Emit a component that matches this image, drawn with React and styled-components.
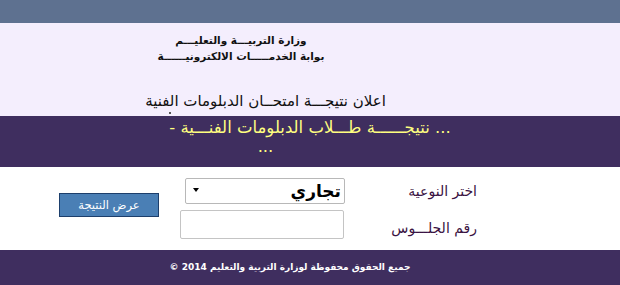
import React from "react";
import styled, { createGlobalStyle } from "styled-components";

const Global = createGlobalStyle`
  html, body { margin: 0; padding: 0; background: #ffffff; }
  body { font-family: "DejaVu Sans", "Noto Sans", sans-serif; }
  * { box-sizing: border-box; }
`;

const Page = styled.div`
  width: 620px;
  height: 285px;
  display: flex;
  flex-direction: column;
  overflow: hidden;
`;

const TopBar = styled.div`
  height: 23px;
  background: #5e7190;
  flex: none;
`;

const Header = styled.div`
  height: 93px;
  background: #f4eefd;
  flex: none;
  display: flex;
  flex-direction: column;
  position: relative;
`;

const Ministry = styled.div`
  width: 482px;
  padding-top: 9px;
  text-align: center;
  direction: rtl;
  font-weight: bold;
  font-size: 10.5px;
  line-height: 16px;
  color: #111;
`;

const Announce = styled.div`
  width: 531px;
  margin-top: 27px;
  text-align: center;
  direction: rtl;
  font-size: 15px;
  line-height: 20px;
  color: #111;
`;

const Speck = styled.span`
  position: absolute;
  left: 169px;
  top: 89px;
  width: 2px;
  height: 2px;
  background: #555;
`;

const Band = styled.div`
  height: 51px;
  background: #3f2e5f;
  flex: none;
  color: #ffff80;
  font-size: 16.5px;
`;

const BandLine = styled.div`
  direction: rtl;
  width: ${(p) => p.$w}px;
  text-align: center;
  line-height: ${(p) => p.$lh}px;
  margin-top: ${(p) => p.$mt}px;
`;

const FormArea = styled.div`
  height: 83px;
  background: #ffffff;
  flex: none;
  direction: rtl;
  display: grid;
  grid-template-columns: 138px 166px 120px;
  grid-template-rows: 26px 29px;
  row-gap: 6px;
  align-content: start;
  padding-top: 11px;
  padding-right: 137px;
`;

const Label = styled.div`
  color: #3a1242;
  font-size: 14px;
  display: flex;
  align-items: center;
  padding-right: 6px;
  margin-top: ${(p) => p.$mt || 0}px;
`;

const Select = styled.div`
  width: 160px;
  height: 26px;
  border: 1px solid #b8b8b8;
  border-radius: 2px;
  background: #fff;
  display: flex;
  align-items: center;
  justify-content: space-between;
  padding: 0 3px 0 7px;
  font-size: 17px;
  font-weight: bold;
  color: #000;
`;

const Arrow = styled.span`
  width: 0;
  height: 0;
  border-left: 3px solid transparent;
  border-right: 3px solid transparent;
  border-top: 4px solid #000;
  margin-bottom: 2px;
`;

const Input = styled.div`
  width: 164px;
  height: 29px;
  border: 1px solid #c4c4c4;
  border-radius: 2px;
  background: #fff;
  margin-right: 1px;
`;

const ButtonCell = styled.div`
  grid-row: 1 / span 2;
  grid-column: 3;
  display: flex;
  align-items: flex-start;
  padding-top: 15px;
  padding-right: 20px;
`;

const Button = styled.div`
  width: 100px;
  height: 24px;
  background: #4a7fb5;
  border: 1px solid #1d3f6c;
  color: #fff;
  font-size: 11.5px;
  display: flex;
  align-items: center;
  justify-content: center;
`;

const Footer = styled.div`
  flex: 1;
  background: #3f2e5f;
  color: #fff;
  font-size: 9px;
  font-weight: bold;
  display: flex;
  align-items: center;
`;

const FooterText = styled.div`
  direction: rtl;
  width: 580px;
  text-align: center;
  padding-bottom: 1px;
`;

export default function App() {
  return (
    <Page>
      <Global />
      <TopBar />
      <Header>
        <Ministry>
          <div>وزارة التربيـــة والتعليـــم</div>
          <div>بوابة الخدمـــــات الالكترونيــــــة</div>
        </Ministry>
        <Announce>اعلان نتيجـــة امتحــان الدبلومات الفنية</Announce>
        <Speck />
      </Header>
      <Band>
        <BandLine $w={620} $lh={20} $mt={2}>
          ... نتيجــــــة طـــلاب الدبلومات الفنـــية -
        </BandLine>
        <BandLine $w={531} $lh={20} $mt={-1}>
          ...
        </BandLine>
      </Band>
      <FormArea>
        <Label>اختر النوعية</Label>
        <Select>
          <span>تجاري</span>
          <Arrow />
        </Select>
        <ButtonCell>
          <Button>عرض النتيجة</Button>
        </ButtonCell>
        <Label $mt={6}>رقم الجلـــوس</Label>
        <Input />
      </FormArea>
      <Footer>
        <FooterText>جميع الحقوق محفوظة لوزارة التربية والتعليم 2014 ©</FooterText>
      </Footer>
    </Page>
  );
}
